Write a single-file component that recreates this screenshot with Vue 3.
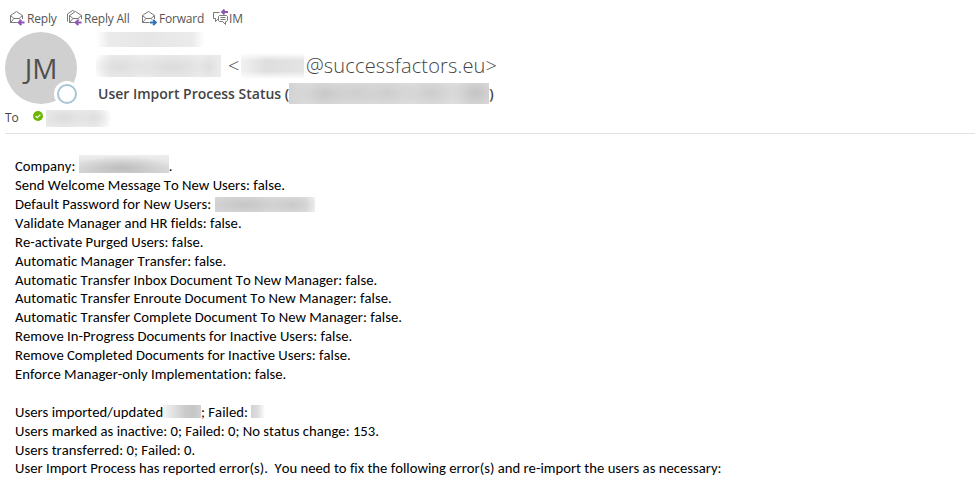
<template>
  <div class="mail">
    <div class="actions">
      <button v-for="a in actions" :key="a.label" :class="['action', a.kind]">
        <svg v-if="a.kind === 'im'" class="icon" width="18" height="18" viewBox="0 0 18 18">
          <path class="line" d="M8.5 3.5H2.5V9.5H4.5V12.5L7 10.2" />
          <path class="line" d="M8.5 6.5H15.5L16.5 7.5V11.5L15.5 12.5H14.5V15.5L11.5 12.5H8.5L7.5 11.5V7.5ZM9.5 8.5H14.5M9.5 10.5H14.5" />
          <path class="arrow" d="M17 3H11.5M13.5 .6L11.1 3L13.5 5.4" />
        </svg>
        <svg v-else class="icon" width="18" height="18" viewBox="0 0 18 18">
          <path v-if="a.kind === 'all'" class="line" d="M1.5 12.5V5L6.5 1.5L8.5 2.2" />
          <g :transform="a.kind === 'all' ? 'translate(2 0)' : ''">
            <path class="line" d="M8.5 13.5H1.5V6.5L7.5 2.5L13.5 6.5V10M1.5 6.5L5 9.5H10L13.5 6.5M1.5 13.5L5 9.5M10 9.5L11.2 10.8" />
          </g>
          <path v-if="a.kind === 'forward'" class="arrow" d="M9 13.5H14.5M12.2 10.9L14.8 13.5L12.2 16.1" />
          <path v-else class="arrow" d="M15.5 13.5H10M12.3 10.9L9.7 13.5L12.3 16.1" />
        </svg>
        <span>{{ a.label }}</span>
      </button>
    </div>

    <div class="header">
      <div class="avatar">
        <span>JM</span>
        <i class="presence"></i>
      </div>
      <div class="info">
        <span class="hidden sent"></span>
        <div class="from">
          <span class="hidden name"></span>
          <span class="lt">&lt;</span>
          <span class="hidden user"></span>
          <span class="domain">@successfactors.eu&gt;</span>
        </div>
        <div class="subject">
          <span>User Import Process Status (</span>
          <span class="hidden date"></span>
          <span>)</span>
        </div>
      </div>
    </div>

    <div class="to">
      <span class="to-label">To</span>
      <svg width="10" height="10" viewBox="0 0 10 10">
        <circle cx="5" cy="5" r="5" fill="#6bb700" />
        <path d="M2.6 5.1L4.3 6.7L7.4 3.6" fill="none" stroke="#fff" stroke-width="1.3" />
      </svg>
      <span class="hidden recipient"></span>
    </div>

    <div class="body">
      <div v-for="(line, i) in lines" :key="i" class="line-row">
        <template v-for="(part, j) in line" :key="j">
          <span v-if="part.hide" :class="['hidden', part.hide]"></span>
          <span v-else>{{ part }}</span>
        </template>
      </div>
    </div>
  </div>
</template>

<script setup>
const actions = [
  { label: "Reply", kind: "reply" },
  { label: "Reply All", kind: "all" },
  { label: "Forward", kind: "forward" },
  { label: "IM", kind: "im" },
];

// every line is a list of text parts and hidden values
const lines = [
  ["Company: ", { hide: "company" }, "."],
  ["Send Welcome Message To New Users: false."],
  ["Default Password for New Users: ", { hide: "password" }],
  ["Validate Manager and HR fields: false."],
  ["Re-activate Purged Users: false."],
  ["Automatic Manager Transfer: false."],
  ["Automatic Transfer Inbox Document To New Manager: false."],
  ["Automatic Transfer Enroute Document To New Manager: false."],
  ["Automatic Transfer Complete Document To New Manager: false."],
  ["Remove In-Progress Documents for Inactive Users: false."],
  ["Remove Completed Documents for Inactive Users: false."],
  ["Enforce Manager-only Implementation: false."],
  [],
  ["Users imported/updated", { hide: "updated" }, "; Failed: ", { hide: "failed" }],
  ["Users marked as inactive: 0; Failed: 0; No status change: 153."],
  ["Users transferred: 0; Failed: 0."],
  ["User Import Process has reported error(s).  You need to fix the following error(s) and re-import the users as necessary:"],
];
</script>

<style>
body {
  background: #fff;
}
</style>

<style scoped>
.mail {
  width: 975px;
  height: 486px;
  overflow: hidden;
  font-family: "Segoe UI", "Open Sans", sans-serif;
  color: #444;
}
.actions {
  display: flex;
  height: 32px;
  padding: 9px 0 0 9px;
  box-sizing: border-box;
}
.action {
  display: flex;
  border: 0;
  padding: 0;
  background: none;
  font: 12px/19px "Segoe UI", "Open Sans", sans-serif;
  letter-spacing: -0.2px;
  color: #555;
}
.reply { width: 57px; }
.all { width: 75px; }
.forward { width: 70px; }
.icon { flex: none; }
.line {
  fill: none;
  stroke: #6a6a6a;
  stroke-width: 0.9;
}
.arrow {
  fill: none;
  stroke: #8e55b5;
  stroke-width: 2;
}
.forward .arrow { stroke: #2f75b5; }

.header {
  display: flex;
  height: 75px;
  padding-left: 5px;
}
.avatar {
  position: relative;
  width: 72px;
  height: 72px;
  border-radius: 50%;
  background: #d0d0d0;
  font-size: 28px;
  line-height: 72px;
  text-align: center;
  color: #505050;
}
.presence {
  position: absolute;
  right: 0;
  bottom: 0;
  width: 16px;
  height: 16px;
  border: 2px solid #a9c5d4;
  border-radius: 50%;
  background: #fff;
  box-shadow: 0 0 0 3px #fff;
}
.info {
  margin-left: 19px;
}

/* smudged values */
.hidden {
  display: block;
  flex: none;
}
.sent {
  width: 109px;
  height: 15px;
  background: linear-gradient(90deg, #fff, #ebebeb 12%, #e6e6e6 50%, #ebebeb 88%, #fff);
}
.from {
  display: flex;
  align-items: center;
  height: 30px;
  margin-top: 4px;
  font-size: 20px;
  line-height: 26px;
  font-weight: 300;
  letter-spacing: 0.16px;
}
.name {
  width: 125px;
  height: 22px;
  background:
    radial-gradient(ellipse 32px 14px at 24px 12px, #dddddd, transparent),
    radial-gradient(ellipse 40px 14px at 76px 12px, #dbdbdb, transparent),
    radial-gradient(ellipse 10px 14px at 113px 12px, #dfdfdf, transparent),
    linear-gradient(90deg, #fff, #ebebeb 12%, #ebebeb);
}
.lt { width: 13px; margin: -1px 0 0 7px; }
.user {
  width: 63px;
  height: 26px;
  background:
    linear-gradient(#fff, transparent 30%, transparent 70%, #fff),
    linear-gradient(90deg, #f1f1f1, #dedede 40%, #e4e4e4);
}
.domain { margin: -1px 0 0 2px; }
.subject {
  display: flex;
  align-items: center;
  height: 22px;
  margin-top: 1px;
  padding-left: 2px;
  font-size: 14px;
  font-weight: 600;
}
.date {
  width: 200px;
  height: 21px;
  background:
    radial-gradient(ellipse 32px 18px at 36px 11px, #c8c8c8, transparent),
    radial-gradient(ellipse 24px 18px at 68px 10px, #cecece, transparent),
    radial-gradient(ellipse 32px 18px at 98px 10px, #cdcdcd, transparent),
    radial-gradient(ellipse 32px 18px at 142px 10px, #cdcdcd, transparent),
    radial-gradient(ellipse 26px 20px at 187px 10px, #c4c4c4, transparent),
    linear-gradient(90deg, #d2d2d2, #e0e0e0 10%, #e0e0e0);
}
.to {
  display: flex;
  height: 26px;
  margin-left: 5px;
  border-bottom: 1px solid #e1e1e1;
  font-size: 12px;
}
.to-label { width: 28px; line-height: 22px; }
.to svg { margin-top: 4px; }
.recipient {
  width: 65px;
  height: 17px;
  margin: 3px 0 0 3px;
  background:
    radial-gradient(ellipse 26px 12px at 18px 8px, #dcdcdc, transparent),
    radial-gradient(ellipse 18px 12px at 48px 8px, #dfdfdf, transparent),
    linear-gradient(90deg, #ebebeb 75%, #fff);
}
.body {
  padding: 22.8px 0 0 15px;
  font-family: Calibri, Carlito, Lato, sans-serif;
  font-size: 14.667px;
  font-kerning: none;
  letter-spacing: 0.015px;
  color: #000;
}
.line-row {
  display: flex;
  align-items: center;
  height: 18.9px;
  white-space: pre;
}
.company {
  width: 90px;
  height: 18px;
  margin-top: -4px;
  background:
    radial-gradient(ellipse 52px 12px at 42px 13px, #bdbdbd, transparent),
    linear-gradient(#eee, #d6d6d6);
}
.password {
  width: 100px;
  height: 15px;
  background:
    radial-gradient(ellipse 44px 12px at 30px 8px, #c6c6c6, transparent),
    radial-gradient(ellipse 26px 12px at 77px 8px, #cacaca, transparent),
    linear-gradient(90deg, #d8d8d8, #dedede 90%, #f0f0f0);
}
.updated {
  width: 38px;
  height: 13px;
  background: linear-gradient(90deg, #f5f5f5, #cacaca 60%, #c6c6c6 80%, #d2d2d2);
}
.failed {
  width: 14px;
  height: 13px;
  background: linear-gradient(90deg, #d2d2d2, #dedede 50%, #fff);
}
</style>
